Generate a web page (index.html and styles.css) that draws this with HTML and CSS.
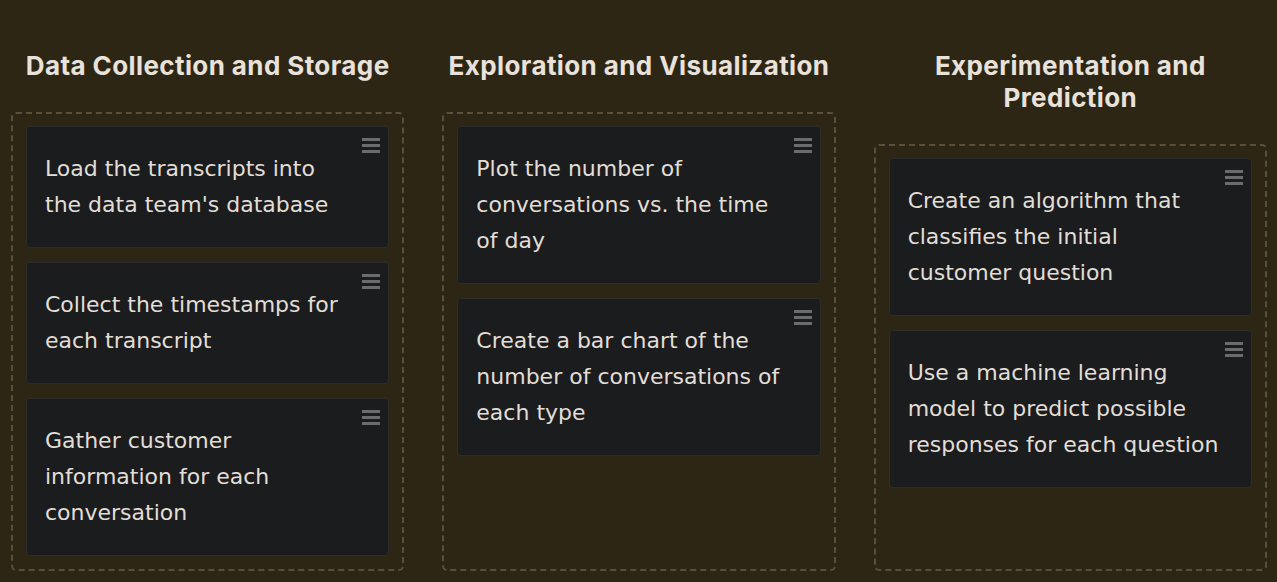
FILE: index.html
```html
<!DOCTYPE html>
<html lang="en">
<head>
<meta charset="utf-8">
<title>Sort tasks</title>
<link rel="stylesheet" href="styles.css">
</head>
<body>
<main class="board">
  <section class="column">
    <h2 class="column-title">Data Collection and Storage</h2>
    <div class="dropzone">
      <div class="card"><p>Load the transcripts into the data team's database</p><span class="grip"><i></i><i></i><i></i></span></div>
      <div class="card"><p>Collect the timestamps for each transcript</p><span class="grip"><i></i><i></i><i></i></span></div>
      <div class="card"><p>Gather customer information for each conversation</p><span class="grip"><i></i><i></i><i></i></span></div>
    </div>
  </section>
  <section class="column">
    <h2 class="column-title">Exploration and Visualization</h2>
    <div class="dropzone">
      <div class="card"><p>Plot the number of conversations vs. the time of day</p><span class="grip"><i></i><i></i><i></i></span></div>
      <div class="card"><p>Create a bar chart of the number of conversations of each type</p><span class="grip"><i></i><i></i><i></i></span></div>
    </div>
  </section>
  <section class="column">
    <h2 class="column-title">Experimentation and Prediction</h2>
    <div class="dropzone">
      <div class="card"><p>Create an algorithm that classifies the initial customer question</p><span class="grip"><i></i><i></i><i></i></span></div>
      <div class="card"><p>Use a machine learning model to predict possible responses for each question</p><span class="grip"><i></i><i></i><i></i></span></div>
    </div>
  </section>
</main>
</body>
</html>
```
FILE: styles.css
```css
* { box-sizing: border-box; }
html, body { margin: 0; padding: 0; }
body {
  background: #2e2614;
  font-family: Inter, "Noto Sans", sans-serif;
  color: #e2ded6;
  height: 582px;
  overflow: hidden;
}
.board {
  display: grid;
  grid-template-columns: 1fr 1fr 1fr;
  column-gap: 38px;
  padding: 50px 10px 11px 11px;
  align-items: stretch;
}
.column {
  display: flex;
  flex-direction: column;
}
.column-title {
  margin: 0 0 30px;
  padding: 0;
  font-size: 26px;
  font-weight: 700;
  letter-spacing: 0.4px;
  line-height: 32px;
  text-align: center;
  color: #e8e2db;
}
.dropzone {
  flex: 1;
  border: 2px dashed #5a5038;
  border-radius: 5px;
  padding: 12px 13px 13px 13px;
  display: flex;
  flex-direction: column;
  gap: 14px;
}
.card {
  position: relative;
  background: #1b1c1e;
  border: 1px solid #2c2d2d;
  border-radius: 4px;
  padding: 24px 12px 24px 18px;
}
.card p {
  margin: 0;
  max-width: 311.8px;
  font-family: "DejaVu Sans", sans-serif;
  font-size: 22px;
  line-height: 36px;
  color: #e2ded6;
}
.grip {
  position: absolute;
  top: 11px;
  right: 8px;
  width: 18px;
  display: flex;
  flex-direction: column;
  gap: 3px;
}
.grip i {
  display: block;
  height: 3px;
  background: #6c6c6c;
}
```
